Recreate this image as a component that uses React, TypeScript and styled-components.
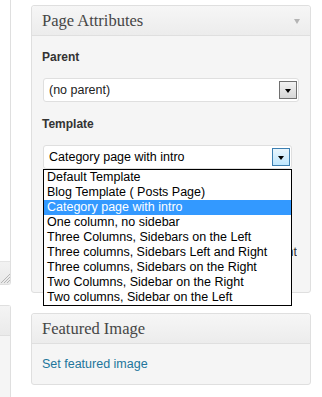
import styled, { createGlobalStyle } from "styled-components";

const GlobalStyle = createGlobalStyle`
  body {
    margin: 0;
    background: #fff;
    font-family: "Liberation Sans", Arial, sans-serif;
    overflow: hidden;
  }
`;

const Page = styled.div`
  display: flex;
  gap: 20px;
  width: 322px;
  height: 397px;
  align-items: flex-start;
`;

const LeftColumn = styled.div`
  width: 11px;
  display: flex;
  flex-direction: column;
  gap: 20px;
`;

const EditorBox = styled.div`
  height: 285px;
  box-sizing: border-box;
  background: #fff;
  border-right: 1px solid #dfdfdf;
  border-bottom: 1px solid #dfdfdf;
  border-bottom-right-radius: 3px;
  display: flex;
  flex-direction: column;
  justify-content: flex-end;
`;

const StatusBar = styled.div`
  height: 22px;
  background: linear-gradient(to bottom, #f2f2f2, #e9e9e9);
  border-top: 1px solid #e4e4e4;
  display: flex;
  justify-content: flex-end;
  align-items: flex-end;
`;

const SideBox = styled.div`
  height: 100px;
  box-sizing: border-box;
  border-top: 1px solid #dfdfdf;
  border-right: 1px solid #dfdfdf;
  border-top-right-radius: 3px;
  background: #f5f5f5;
`;

const SideBoxHead = styled.div`
  height: 29px;
  background: linear-gradient(to bottom, #f4f4f4, #eaeaea);
  border-bottom: 1px solid #dfdfdf;
`;

const MainColumn = styled.div`
  width: 280px;
  margin-top: 5px;
  display: flex;
  flex-direction: column;
  gap: 20px;
`;

const Panel = styled.div`
  border: 1px solid #dfdfdf;
  border-radius: 3px;
  background: #f5f5f5;
  box-shadow: inset 0 1px 0 #fff;
`;

const PanelHead = styled.div`
  height: 29px;
  display: flex;
  align-items: center;
  justify-content: space-between;
  padding: 0 10px;
  background: linear-gradient(to bottom, #f6f6f6, #ececec);
  border-bottom: 1px solid #dfdfdf;
  border-radius: 3px 3px 0 0;
`;

const Title = styled.h3`
  margin: 0;
  font-family: "Liberation Serif", Georgia, serif;
  font-weight: normal;
  font-size: 16.5px;
  color: #464646;
  padding-top: 1px;
`;

const Toggle = styled.span`
  width: 0;
  height: 0;
  border-left: 3.5px solid transparent;
  border-right: 3.5px solid transparent;
  border-top: 5px solid #b4b4b4;
  margin-top: 1px;
`;

const PanelBody = styled.div<{ $pad?: string }>`
  padding: ${({ $pad }) => $pad ?? "0 13px 0 10px"};
  display: flex;
  flex-direction: column;
  align-items: flex-start;
`;

const Label = styled.div<{ $top: number }>`
  margin-top: ${({ $top }) => $top}px;
  font-size: 12px;
  font-weight: bold;
  line-height: 14px;
  color: #333;
`;

const SelectWrap = styled.div<{ $top: number }>`
  position: relative;
  margin-top: ${({ $top }) => $top}px;
  margin-left: 1px;
`;

const Select = styled.div<{ $width: number; $ink?: string }>`
  width: ${({ $width }) => $width}px;
  height: 24px;
  box-sizing: border-box;
  border: 1px solid #dfdfdf;
  border-radius: 3px;
  background: #fff;
  display: flex;
  align-items: center;
  justify-content: space-between;
  padding: 0 1px 0 5px;
  font-size: 12.5px;
  color: ${({ $ink }) => $ink ?? "#222"};
`;

const DropButton = styled.span<{ $active?: boolean }>`
  width: 18px;
  height: 18px;
  box-sizing: border-box;
  border: 1px solid ${({ $active }) => ($active ? "#3c7fb1" : "#707070")};
  background: ${({ $active }) =>
    $active
      ? "linear-gradient(to bottom, #eaf6fd, #bee6fd)"
      : "linear-gradient(to bottom, #f2f2f2, #d6d6d6)"};
  display: flex;
  align-items: center;
  justify-content: center;
  &::after {
    content: "";
    border-left: 3.5px solid transparent;
    border-right: 3.5px solid transparent;
    border-top: 4px solid #000;
    margin-top: 1px;
  }
`;

const OptionList = styled.ul`
  position: absolute;
  top: 100%;
  left: 0;
  width: 249px;
  box-sizing: border-box;
  margin: 0;
  padding: 0;
  list-style: none;
  background: #fff;
  border: 1px solid #000;
  z-index: 2;
`;

const Option = styled.li<{ $selected?: boolean }>`
  height: 15px;
  line-height: 15px;
  padding-left: 3px;
  font-size: 12.5px;
  white-space: nowrap;
  color: ${({ $selected }) => ($selected ? "#fff" : "#000")};
  background: ${({ $selected }) => ($selected ? "#3399ff" : "transparent")};
`;

const OrderSpace = styled.div`
  height: 74px;
`;

const Help = styled.p`
  margin: 0 0 31px;
  font-size: 12.5px;
  line-height: 18px;
  color: #333;
  align-self: stretch;
  text-align: right;
  white-space: nowrap;
  overflow: hidden;
`;

const Link = styled.a`
  color: #21759b;
  font-size: 12.5px;
  line-height: 15px;
  text-decoration: none;
`;

const templates = [
  "Default Template",
  "Blog Template ( Posts Page)",
  "Category page with intro",
  "One column, no sidebar",
  "Three Columns, Sidebars on the Left",
  "Three columns, Sidebars Left and Right",
  "Three columns, Sidebars on the Right",
  "Two Columns, Sidebar on the Right",
  "Two columns, Sidebar on the Left",
];

const Grip = () => (
  <svg width="10" height="12" viewBox="0 0 10 12">
    <g stroke="#b5b5b5" strokeWidth="1">
      <line x1="1" y1="11" x2="10" y2="2" />
      <line x1="4" y1="11" x2="10" y2="5" />
      <line x1="7" y1="11" x2="10" y2="8" />
    </g>
  </svg>
);

export default function App() {
  return (
    <>
      <GlobalStyle />
      <Page>
        <LeftColumn>
          <EditorBox>
            <StatusBar>
              <Grip />
            </StatusBar>
          </EditorBox>
          <SideBox>
            <SideBoxHead />
          </SideBox>
        </LeftColumn>
        <MainColumn>
          <Panel>
            <PanelHead>
              <Title>Page Attributes</Title>
              <Toggle />
            </PanelHead>
            <PanelBody>
              <Label $top={14}>Parent</Label>
              <SelectWrap $top={14}>
                <Select $width={256}>
                  <span>(no parent)</span>
                  <DropButton />
                </Select>
              </SelectWrap>
              <Label $top={15}>Template</Label>
              <SelectWrap $top={14}>
                <Select $width={249} $ink="#000">
                  <span>Category page with intro</span>
                  <DropButton $active />
                </Select>
                <OptionList>
                  {templates.map((t) => (
                    <Option key={t} $selected={t === "Category page with intro"}>
                      {t}
                    </Option>
                  ))}
                </OptionList>
              </SelectWrap>
              <OrderSpace />
              <Help>Use the Help tab at the upper right</Help>
            </PanelBody>
          </Panel>
          <Panel>
            <PanelHead>
              <Title>Featured Image</Title>
            </PanelHead>
            <PanelBody $pad="13px 10px 12px">
              <Link href="#">Set featured image</Link>
            </PanelBody>
          </Panel>
        </MainColumn>
      </Page>
    </>
  );
}
